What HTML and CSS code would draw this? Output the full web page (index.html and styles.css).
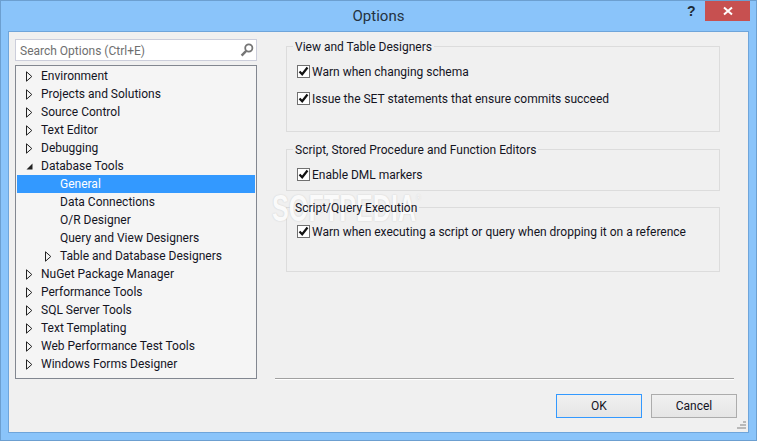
FILE: index.html
```html
<!DOCTYPE html>
<html lang="en">
<head>
<meta charset="utf-8">
<title>Options</title>
<link rel="stylesheet" href="styles.css">
</head>
<body>
<div class="window">
  <header class="titlebar">
    <h1 class="title">Options</h1>
    <span class="help">?</span>
    <span class="close"><svg width="10" height="10" viewBox="0 0 10 10"><path d="M1 1.5 9 8.5M9 1.5 1 8.5" stroke="#fff" stroke-width="2" fill="none"/></svg></span>
  </header>
  <div class="content">
    <div class="left">
      <div class="search">
        <span class="search-text">Search Options (Ctrl+E)</span>
        <svg class="search-icon" width="14" height="14" viewBox="0 0 14 14"><circle cx="8.8" cy="5" r="3.6" fill="none" stroke="#757575" stroke-width="1.8"/><path d="M6.2 7.8 1.6 12.6" stroke="#757575" stroke-width="2.4" fill="none"/></svg>
      </div>
      <ul class="tree">
        <li class="row"><svg class="arrow" width="7" height="11" viewBox="0 0 7 11"><path d="M.5.8 5.8 5.5.5 10.2Z" fill="none" stroke="#222"/></svg><span>Environment</span></li>
        <li class="row"><svg class="arrow" width="7" height="11" viewBox="0 0 7 11"><path d="M.5.8 5.8 5.5.5 10.2Z" fill="none" stroke="#222"/></svg><span>Projects and Solutions</span></li>
        <li class="row"><svg class="arrow" width="7" height="11" viewBox="0 0 7 11"><path d="M.5.8 5.8 5.5.5 10.2Z" fill="none" stroke="#222"/></svg><span>Source Control</span></li>
        <li class="row"><svg class="arrow" width="7" height="11" viewBox="0 0 7 11"><path d="M.5.8 5.8 5.5.5 10.2Z" fill="none" stroke="#222"/></svg><span>Text Editor</span></li>
        <li class="row"><svg class="arrow" width="7" height="11" viewBox="0 0 7 11"><path d="M.5.8 5.8 5.5.5 10.2Z" fill="none" stroke="#222"/></svg><span>Debugging</span></li>
        <li class="row"><svg class="arrow" width="7" height="11" viewBox="0 0 7 11"><path d="M6.5 2.5V8.5H.5Z" fill="#222"/></svg><span>Database Tools</span></li>
        <li class="row sub selected"><span>General</span></li>
        <li class="row sub"><span>Data Connections</span></li>
        <li class="row sub"><span>O/R Designer</span></li>
        <li class="row sub"><span>Query and View Designers</span></li>
        <li class="row subarrow"><svg class="arrow" width="7" height="11" viewBox="0 0 7 11"><path d="M.5.8 5.8 5.5.5 10.2Z" fill="none" stroke="#222"/></svg><span>Table and Database Designers</span></li>
        <li class="row"><svg class="arrow" width="7" height="11" viewBox="0 0 7 11"><path d="M.5.8 5.8 5.5.5 10.2Z" fill="none" stroke="#222"/></svg><span>NuGet Package Manager</span></li>
        <li class="row"><svg class="arrow" width="7" height="11" viewBox="0 0 7 11"><path d="M.5.8 5.8 5.5.5 10.2Z" fill="none" stroke="#222"/></svg><span>Performance Tools</span></li>
        <li class="row"><svg class="arrow" width="7" height="11" viewBox="0 0 7 11"><path d="M.5.8 5.8 5.5.5 10.2Z" fill="none" stroke="#222"/></svg><span>SQL Server Tools</span></li>
        <li class="row"><svg class="arrow" width="7" height="11" viewBox="0 0 7 11"><path d="M.5.8 5.8 5.5.5 10.2Z" fill="none" stroke="#222"/></svg><span>Text Templating</span></li>
        <li class="row"><svg class="arrow" width="7" height="11" viewBox="0 0 7 11"><path d="M.5.8 5.8 5.5.5 10.2Z" fill="none" stroke="#222"/></svg><span>Web Performance Test Tools</span></li>
        <li class="row"><svg class="arrow" width="7" height="11" viewBox="0 0 7 11"><path d="M.5.8 5.8 5.5.5 10.2Z" fill="none" stroke="#222"/></svg><span>Windows Forms Designer</span></li>
      </ul>
    </div>
    <div class="right">
      <section class="group g1">
        <div class="legend"><span class="legend-text">View and Table Designers</span></div>
        <div class="check first"><span class="box"><svg width="11" height="11" viewBox="0 0 11 11"><path d="M1.5 5.5 4.2 8.3 9.5 1.5" fill="none" stroke="#111" stroke-width="2.2"/></svg></span><span class="check-text">Warn when changing schema</span></div>
        <div class="check second"><span class="box"><svg width="11" height="11" viewBox="0 0 11 11"><path d="M1.5 5.5 4.2 8.3 9.5 1.5" fill="none" stroke="#111" stroke-width="2.2"/></svg></span><span class="check-text">Issue the SET statements that ensure commits succeed</span></div>
      </section>
      <section class="group g2">
        <div class="legend"><span class="legend-text">Script, Stored Procedure and Function Editors</span></div>
        <div class="check first"><span class="box"><svg width="11" height="11" viewBox="0 0 11 11"><path d="M1.5 5.5 4.2 8.3 9.5 1.5" fill="none" stroke="#111" stroke-width="2.2"/></svg></span><span class="check-text">Enable DML markers</span></div>
      </section>
      <section class="group g3">
        <div class="legend"><span class="legend-text">Script/Query Execution</span></div>
        <div class="check third"><span class="box"><svg width="11" height="11" viewBox="0 0 11 11"><path d="M1.5 5.5 4.2 8.3 9.5 1.5" fill="none" stroke="#111" stroke-width="2.2"/></svg></span><span class="check-text">Warn when executing a script or query when dropping it on a reference</span></div>
      </section>
      <div class="separator"></div>
      <div class="buttons">
        <button class="btn default" type="button">OK</button>
        <button class="btn" type="button">Cancel</button>
      </div>
    </div>
    <div class="watermark">SOFTPEDIA<sup>®</sup></div>
    <svg class="grip" width="9" height="9" viewBox="0 0 9 9"><path d="M6 0h3v2H6zM3 3h3v2H3zM6 3h3v2H6zM0 6h3v2H0zM3 6h3v2H3zM6 6h3v2H6z" fill="#b9b9b9"/></svg>
  </div>
</div>
</body>
</html>
```
FILE: styles.css
```css
* { box-sizing: border-box; }
html, body { margin: 0; padding: 0; }
body { width: 757px; height: 441px; overflow: hidden; font-family: Roboto, "Noto Sans", sans-serif; font-size: 12px; color: #14141f; }
.window { width: 757px; height: 441px; background: #8ac4fa; border: 1px solid #6c9fd0; display: flex; flex-direction: column; padding: 0 7px 7px 7px; }
.titlebar { height: 30px; flex: none; display: flex; align-items: flex-start; position: relative; }
.title { margin: 0; width: 100%; text-align: center; font-size: 15px; font-weight: 400; line-height: 31px; color: #243240; }
.help { position: absolute; left: 679px; top: 1px; font: 700 14px/18px "Liberation Sans", sans-serif; color: #1e2a35; }
.close { position: absolute; left: 697px; top: 0; width: 45px; height: 20px; background: #c75050; display: flex; align-items: center; justify-content: center; }
.content { flex: 1; background: #f0f0f0; border: 1px solid #6fa5da; display: flex; padding: 7px 12px 0 6px; position: relative; }
.left { width: 242px; flex: none; display: flex; flex-direction: column; gap: 4px; }
.search { height: 22px; flex: none; background: #fff; border: 1px solid #cccedb; display: flex; align-items: center; justify-content: space-between; padding: 0 2px 0 4px; }
.search-text { color: #6f6f6f; padding-top: 2px; }
.tree { list-style: none; margin: 0; height: 314px; flex: none; padding: 1px; background: #f5f5f5; border: 1px solid #828790; }
.row { height: 18px; line-height: 18px; padding-left: 24px; display: flex; align-items: center; white-space: nowrap; }
.arrow { flex: none; margin-left: -15px; margin-right: 8px; }
.row.sub, .row.subarrow { padding-left: 43px; }
.selected { background: #3399ff; color: #fff; }
.right { width: 462px; margin-left: 18px; flex: none; display: flex; flex-direction: column; padding-top: 7px; }
.group { margin-left: 11px; width: 434px; border: 1px solid #dcdcdc; padding-left: 10px; flex: none; }
.g1 { height: 86px; }
.g2 { height: 42px; margin-top: 17px; }
.g3 { height: 65px; margin-top: 16px; }
.legend { width: fit-content; height: 16px; margin: -8px 0 0 -4px; padding: 0 2px; line-height: 16px; background: #f0f0f0; white-space: nowrap; }
.legend-text { position: relative; z-index: 2; }
.check { height: 18px; display: flex; align-items: center; white-space: nowrap; }
.check-text { padding-top: 1px; }
.check.first { margin-top: 7px; }
.check.second { margin-top: 9px; }
.check.third { margin-top: 6px; }
.box { width: 13px; height: 13px; flex: none; margin-right: 2px; background: #fff; border: 1px solid #707070; display: flex; align-items: center; justify-content: center; }
.separator { margin-top: auto; height: 2px; border-top: 1px solid #a0a0a0; background: #fff; width: 459px; flex: none; }
.buttons { display: flex; justify-content: flex-end; gap: 9px; margin-top: 14px; margin-bottom: 14px; flex: none; }
.btn { width: 86px; height: 24px; padding: 0; background: linear-gradient(#f0f0f0, #e5e5e5); border: 1px solid #acacac; font: inherit; color: #14141f; }
.btn.default { border-color: #3399ff; }
.watermark { position: absolute; z-index: 1; left: 263px; top: 157px; font: 700 36px/40px "Liberation Sans", sans-serif; color: #fafafa; text-shadow: 0 0 2px rgba(0,0,0,.16); transform-origin: left center; transform: scaleX(.7); pointer-events: none; white-space: nowrap; }
.watermark sup { font-size: 9px; font-weight: 400; vertical-align: 20px; line-height: 0; }
.grip { position: absolute; right: 2px; bottom: 2px; }
```
